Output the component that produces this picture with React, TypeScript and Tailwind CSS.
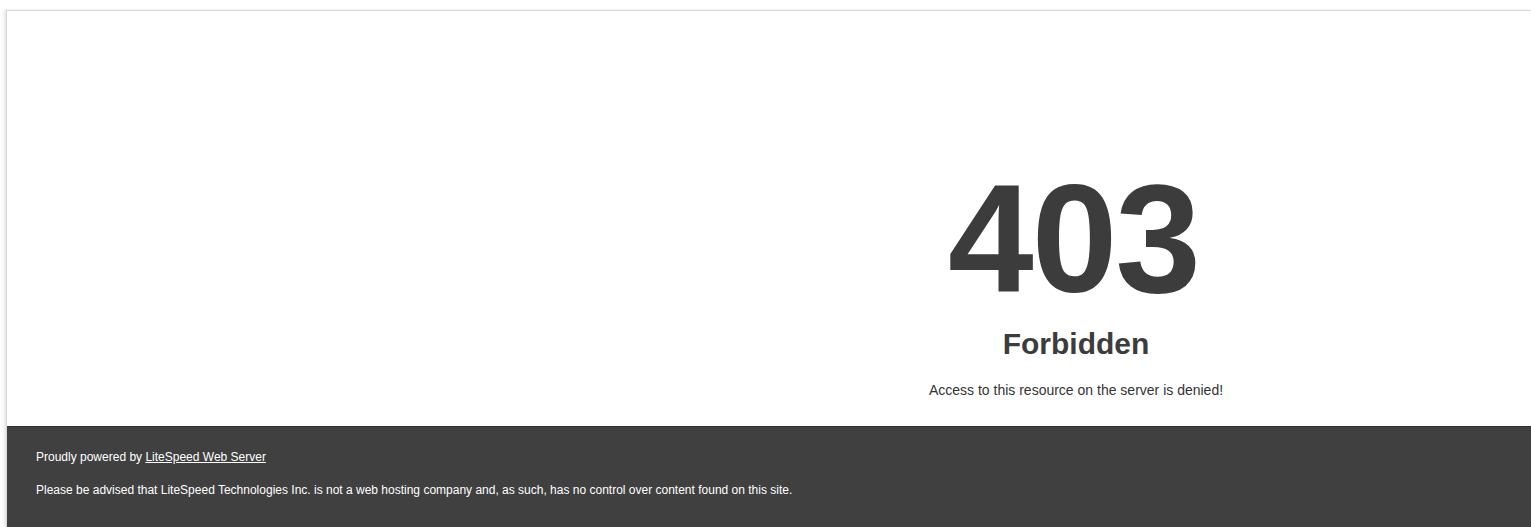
export default function App() {
  return (
    <div
      className="h-[527px] w-full overflow-hidden bg-white pt-[10px] pl-[6px]"
      style={{ fontFamily: '"Liberation Sans", Arial, Helvetica, sans-serif' }}
    >
      <div className="flex h-full flex-col border-t border-l border-[#d6d6d6] shadow-[-2px_0_3px_rgba(0,0,0,0.1)]">
        {/* Main */}
        <div className="flex h-[415px] shrink-0">
          <div className="w-[614px] shrink-0" />
          <div className="flex-1 pt-[151px] text-center text-[#3c3c3c]">
            <h1 className="mr-[5px] text-[154px] font-bold leading-none tracking-[-2px]">403</h1>
            <h2 className="mt-[10px] text-[30px] font-bold leading-[36px]">Forbidden</h2>
            <p className="mt-[18px] text-[14px] leading-[20px] text-[#333]">
              Access to this resource on the server is denied!
            </p>
          </div>
        </div>

        {/* Footer */}
        <div className="flex-1 border-t border-[#2f2f2f] bg-[#404040] pt-[22px] pl-[29px] text-[12px] leading-[16px] text-white">
          <p>
            Proudly powered by{" "}
            <a href="#" className="underline">
              LiteSpeed Web Server
            </a>
          </p>
          <p className="mt-[17px]">
            Please be advised that LiteSpeed Technologies Inc. is not a web hosting company and, as such, has no control
            over content found on this site.
          </p>
        </div>
      </div>
    </div>
  );
}
